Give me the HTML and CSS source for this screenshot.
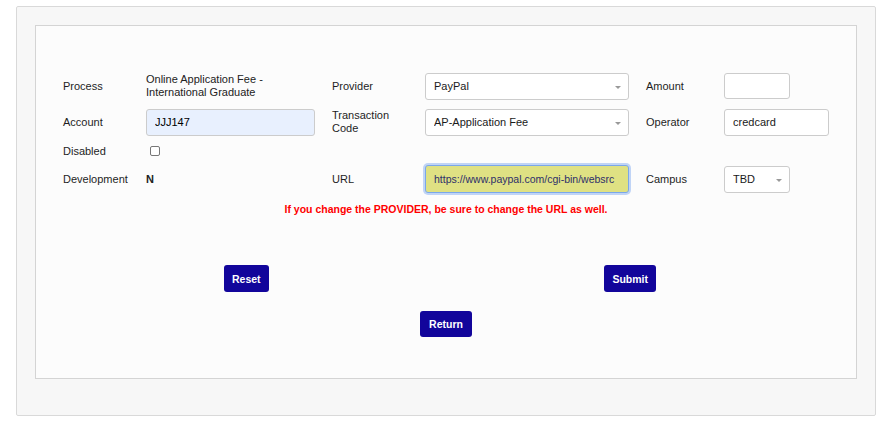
FILE: index.html
```html
<!DOCTYPE html>
<html lang="en">

<head>
    <meta charset="UTF-8">
    <meta name="viewport" content="width=device-width, initial-scale=1.0">
    <title>Fee Maintenance</title>
    <link rel="stylesheet" href="styles.css">
</head>

<body>
    <div class="page">
        <div class="panel">
            <!-- Fee details -->
            <form class="fee-form">
                <label class="lbl">Process</label>
                <div class="val">Online Application Fee -<br>International Graduate</div>
                <label class="lbl">Provider</label>
                <div class="val">
                    <span class="select-wrap provider">
                        <select><option>PayPal</option></select>
                    </span>
                </div>
                <label class="lbl">Amount</label>
                <div class="val"><input type="text" class="amount" value=""></div>

                <label class="lbl">Account</label>
                <div class="val"><input type="text" class="account" value="JJJ147"></div>
                <label class="lbl">Transaction<br>Code</label>
                <div class="val">
                    <span class="select-wrap provider">
                        <select><option>AP-Application Fee</option></select>
                    </span>
                </div>
                <label class="lbl">Operator</label>
                <div class="val"><input type="text" class="operator" value="credcard"></div>

                <label class="lbl">Disabled</label>
                <div class="val"><input type="checkbox" class="check"></div>
                <div></div><div></div><div></div><div></div>

                <label class="lbl">Development</label>
                <div class="val bold">N</div>
                <label class="lbl">URL</label>
                <div class="val"><input type="text" class="url" value="https://www.paypal.com/cgi-bin/websrc"></div>
                <label class="lbl">Campus</label>
                <div class="val">
                    <span class="select-wrap campus">
                        <select><option>TBD</option></select>
                    </span>
                </div>
            </form>

            <p class="warning">If you change the PROVIDER, be sure to change the URL as well.</p>

            <div class="actions">
                <button type="button">Reset</button>
                <button type="button">Submit</button>
            </div>
            <div class="actions-center">
                <button type="button">Return</button>
            </div>
        </div>
    </div>
</body>

</html>
```

FILE: styles.css
```css
body {
    font-family: 'Liberation Sans', Arial, sans-serif;
    font-size: 11px;
    background-color: #fff;
    color: #222;
    margin: 0;
}

.page {
    margin: 6px 8px 0 16px;
    padding: 18px 18px 36px;
    background-color: #f7f7f7;
    border: 1px solid #d9d9d9;
    border-radius: 2px;
}

.panel {
    background-color: #fcfcfc;
    border: 1px solid #d4d4d4;
    padding: 42px 27px 41px;
}

.fee-form {
    display: grid;
    grid-template-columns: 83px 186px 93px 221px 78px auto;
    grid-template-rows: 36px 36px 22px 34px;
    align-items: center;
}

.lbl {
    line-height: 13px;
    color: #1e1e1e;
}

.val {
    line-height: 13px;
}

.bold {
    font-weight: bold;
}

input[type="text"],
select {
    font-family: inherit;
    font-size: 11px;
    color: #1a1a1a;
    box-sizing: border-box;
    border: 1px solid #ccc;
    border-radius: 3px;
    background-color: #fff;
    padding: 0 8px;
    outline: none;
}

input[type="text"] {
    height: 27px;
    display: block;
}

input.account {
    width: 169px;
    background-color: #e8f0fe;
    color: #000;
}

input.amount {
    width: 66px;
    height: 26px;
}

input.operator {
    width: 105px;
}

input.url {
    width: 204px;
    height: 28px;
    font-size: 10.5px;
    background-color: #dfe183;
    border-color: #7aa7ea;
    box-shadow: 0 0 0 2px rgba(120, 165, 240, 0.45);
    color: #2d2f6a;
}

.select-wrap {
    position: relative;
    display: inline-block;
    vertical-align: middle;
}

.select-wrap select {
    appearance: none;
    -webkit-appearance: none;
    height: 27px;
    width: 100%;
}

.select-wrap::after {
    content: "";
    position: absolute;
    right: 8px;
    top: 13px;
    border-left: 3px solid transparent;
    border-right: 3px solid transparent;
    border-top: 3px solid #999;
    pointer-events: none;
}

.provider {
    width: 204px;
}

.campus {
    width: 66px;
}

.check {
    appearance: none;
    -webkit-appearance: none;
    width: 10px;
    height: 10px;
    margin: 0 0 0 4px;
    border: 1px solid #777;
    border-radius: 2px;
    background-color: #fff;
    display: block;
}

.warning {
    color: #ff0000;
    font-size: 10.5px;
    font-weight: bold;
    text-align: center;
    margin: 7px 0 0;
    line-height: 13px;
}

button {
    font-family: inherit;
    font-size: 10.5px;
    font-weight: bold;
    color: #fff;
    background-color: #12059b;
    border: none;
    border-radius: 3px;
    height: 27px;
    padding: 0 8px;
    cursor: pointer;
}

.actions {
    display: flex;
    justify-content: space-between;
    margin-top: 49px;
    padding: 0 173px 0 161px;
}

.actions-center {
    display: flex;
    justify-content: center;
    margin-top: 19px;
}

.actions-center button {
    height: 26px;
    padding: 0 9px;
}
```
